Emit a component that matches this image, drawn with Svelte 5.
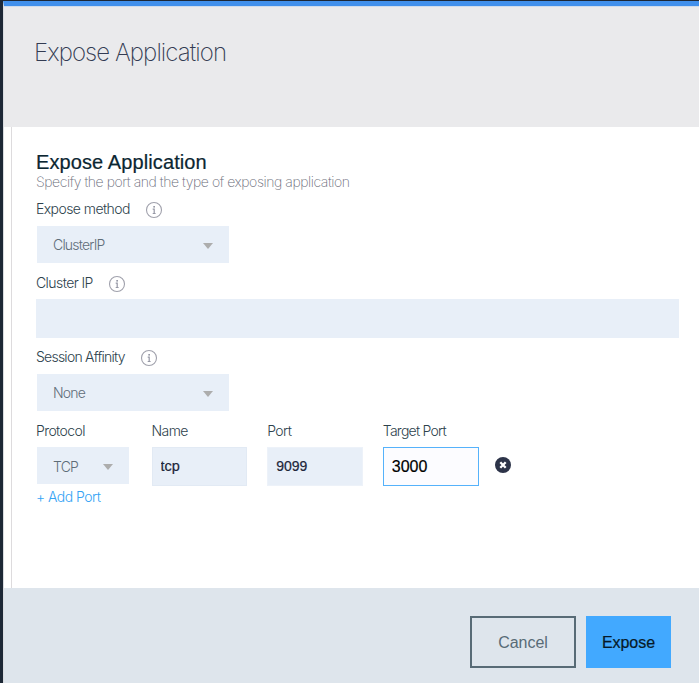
<script>
  let clusterIp = $state('');
  let portName = $state('tcp');
  let port = $state('9099');
  let targetPort = $state('3000');
</script>

{#snippet info()}
  <svg class="info" width="18" height="18" viewBox="0 0 18 18" aria-hidden="true">
    <circle cx="9" cy="9" r="7.5" fill="none" stroke="#a0a1ac" stroke-width="1.1" />
    <rect x="8.3" y="5" width="1.7" height="1.6" fill="#9698a5" />
    <path d="M7.7 8.1h1.5v4.6M7.7 12.5h2.9" fill="none" stroke="#9698a5" stroke-width="1.2" />
  </svg>
{/snippet}

{#snippet select(value, narrow)}
  <div class="select" class:narrow>
    <span>{value}</span>
    <svg width="10" height="6" viewBox="0 0 10 6" aria-hidden="true"><path d="M0 0h10L5 6z" fill="#adadad" /></svg>
  </div>
{/snippet}

<div class="window">
  <div class="panel">
    <header><h1>Expose Application</h1></header>
    <main>
      <h2>Expose Application</h2>
      <p class="subtitle">Specify the port and the type of exposing application</p>

      <div class="label"><span class="l1">Expose method</span>{@render info()}</div>
      {@render select('ClusterIP', false)}

      <div class="label second"><span class="l2">Cluster IP</span>{@render info()}</div>
      <input class="wide" bind:value={clusterIp} aria-label="Cluster IP" />

      <div class="label third"><span class="l3">Session Affinity</span>{@render info()}</div>
      {@render select('None', false)}

      <div class="ports">
        <div class="field">
          <span class="name">Protocol</span>
          {@render select('TCP', true)}
        </div>
        <div class="field">
          <span class="name">Name</span>
          <input class="tcp" bind:value={portName} aria-label="Name" />
        </div>
        <div class="field">
          <span class="name">Port</span>
          <input class="port" bind:value={port} aria-label="Port" />
        </div>
        <div class="field">
          <span class="name target">Target Port</span>
          <input class="active" bind:value={targetPort} aria-label="Target Port" />
        </div>
        <button class="remove" aria-label="Remove port">
          <svg width="16" height="16" viewBox="0 0 16 16"><circle cx="8" cy="8" r="8" fill="#2d3449" /><path d="M5.3 5.3l5.4 5.4m0-5.4l-5.4 5.4" stroke="#fff" stroke-width="2.3" /></svg>
        </button>
      </div>
      <button class="add">+ Add Port</button>
    </main>
    <footer>
      <button class="cancel">Cancel</button>
      <button class="expose">Expose</button>
    </footer>
  </div>
</div>

<style>
  * { box-sizing: border-box; }
  .window {
    width: 699px;
    height: 683px;
    padding: 1px 0 0 3px;
    background: #1d2836;
    overflow: hidden;
    font-family: Inter, 'Liberation Sans', sans-serif;
    font-weight: 300;
  }
  .panel {
    height: 682px;
    display: flex;
    flex-direction: column;
    background: #fff;
    border-left: 1px solid #d9dce0;
    border-top: 5px solid #4190ec;
  }
  header {
    height: 121px;
    flex: none;
    padding: 31px 0 0 30px;
    background: #eaeaec;
    border-top: 1px solid #cfdcec;
  }
  h1 {
    margin: 0;
    font-size: 24px;
    line-height: 30px;
    font-weight: 200;
    letter-spacing: -0.92px;
    color: #333b52;
    white-space: nowrap;
  }
  main {
    height: 461px;
    flex: none;
    margin-left: 7px;
    padding: 23px 20px 0 24px;
    border-left: 1px solid #dddbdd;
  }
  h2 {
    margin: 0;
    font: 400 20px/24px 'Liberation Sans', sans-serif;
    letter-spacing: 0.1px;
    color: #0b2631;
    white-space: nowrap;
    -webkit-text-stroke: 0.2px #0b2631;
  }
  .subtitle {
    margin: 0;
    height: 17px;
    font-size: 14px;
    line-height: 15px;
    font-weight: 200;
    letter-spacing: -0.44px;
    color: #6a6c79;
    white-space: nowrap;
  }
  .label {
    display: flex;
    align-items: center;
    height: 18px;
    margin-top: 10px;
    font-size: 14px;
    line-height: 18px;
    letter-spacing: -0.57px;
    color: #2d424c;
    white-space: nowrap;
  }
  .label span { margin-top: -2px; }
  .info { margin-left: 15px; flex: none; }
  .l1 { width: 94px; }
  .l2 { width: 57px; }
  .l3 { width: 89px; letter-spacing: -0.76px; }
  .second { margin-top: 12px; }
  .third { margin-top: 11px; }
  .select {
    display: flex;
    align-items: center;
    justify-content: space-between;
    width: 192px;
    height: 37px;
    margin: 7px 0 0 1px;
    padding: 0 16px;
    background: #e8eff8;
    color: #5f6d78;
    font-size: 14px;
    letter-spacing: -0.8px;
  }
  .select svg { margin-top: 3px; }
  .select.narrow { width: 92px; }
  .narrow span { margin-top: 1px; }
  input {
    display: block;
    width: 95px;
    height: 39px;
    margin: 7px 0 0;
    padding: 0 0 0 8px;
    border: 1px solid #e2eaf4;
    border-radius: 0;
    outline: 0;
    background: #e8eff8;
    color: #20263a;
    font: 400 14px 'Liberation Sans', sans-serif;
    -webkit-text-stroke: 0.2px;
  }
  .wide { width: 643px; margin-top: 6px; border-color: #e8eff8; }
  .tcp { padding-bottom: 2px; font-size: 14.5px; }
  .port { width: 96px; padding-bottom: 2px; border-color: #edf2f9; }
  .active {
    width: 96px;
    background: #fcfcff;
    border-color: #55b2fb;
    color: #000;
    font-size: 16px;
  }
  .ports {
    display: flex;
    margin-top: 11px;
    height: 66px;
  }
  .field { width: 115.6px; flex: none; }
  .name {
    display: block;
    height: 18px;
    font-size: 14px;
    line-height: 18px;
    letter-spacing: -0.6px;
    color: #2d424c;
  }
  .target { letter-spacing: -0.75px; }
  button { padding: 0; border: 0; background: none; border-radius: 0; }
  .remove { width: 16px; height: 16px; margin: 35px 0 0 -3px; }
  .remove svg { display: block; }
  .add {
    display: block;
    font: 300 14px/18px Inter, sans-serif;
    letter-spacing: -0.53px;
    color: #34a3f5;
  }
  footer {
    flex: 1;
    display: flex;
    justify-content: flex-end;
    gap: 10px;
    padding: 28px 28px 0 0;
    background: #dee5ec;
  }
  footer button {
    height: 52px;
    padding-top: 1px;
    font: 400 16px 'Liberation Sans', sans-serif;
    letter-spacing: -0.05px;
  }
  .cancel { width: 106px; border: 2px solid #586b76; color: #586b76; }
  .expose { width: 85px; background: #42a9ff; color: #061a29; -webkit-text-stroke: 0.2px; }
</style>
